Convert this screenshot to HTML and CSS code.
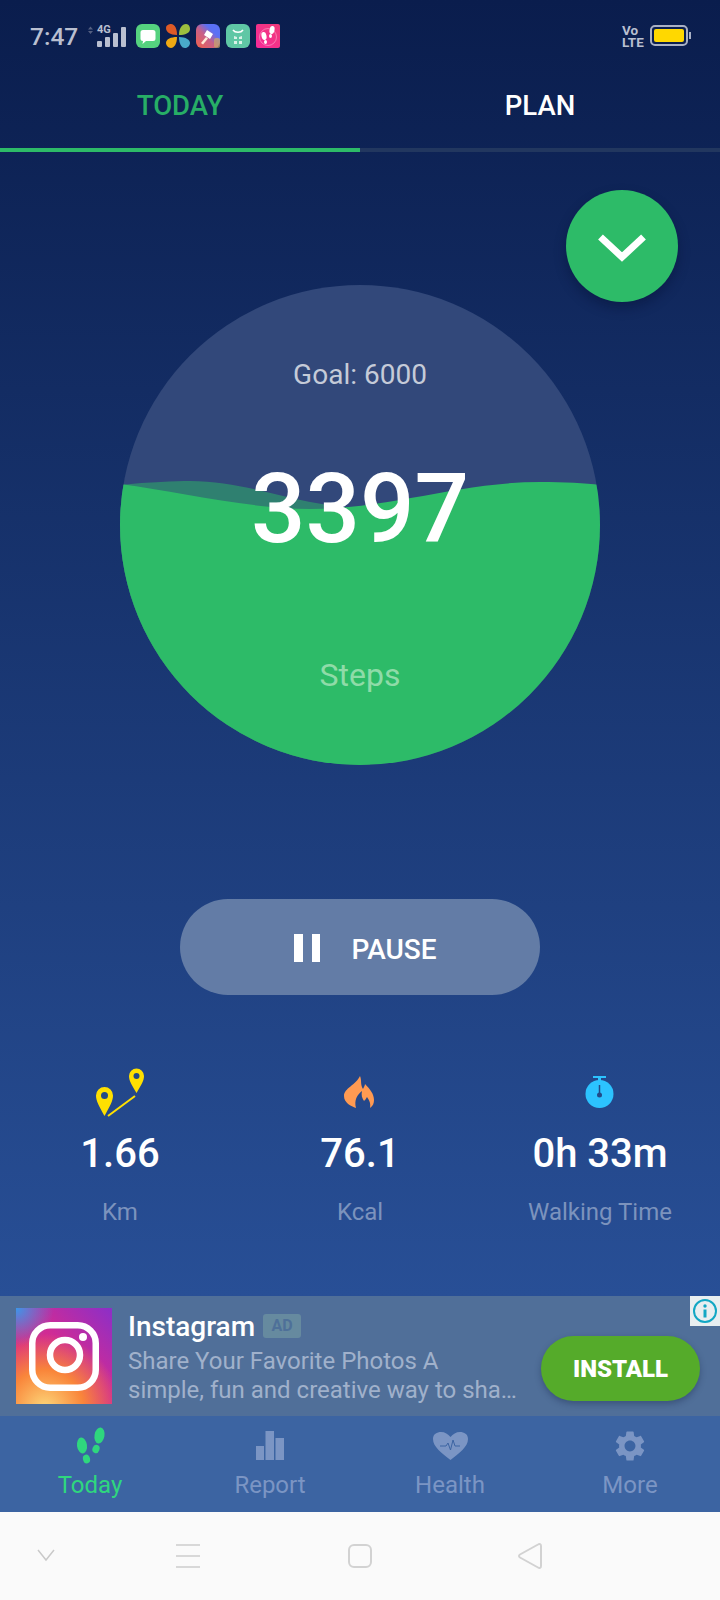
FILE: index.html
```html
<!DOCTYPE html>
<html>
<head lang="en">
    <meta charset="UTF-8">
    <title>Steps</title>
    <link rel="stylesheet" href="styles.css">
</head>
<body>
<div id="page">
    <div id="status">
        <span class="time">7:47</span>
        <svg class="net" width="42" height="24" viewBox="0 0 42 24">
            <path d="M3 3.500 5.500 .5 8 3.500zM3 5 5.500 8 8 5z" fill="#545f80"/>
            <rect x="12" y="15" width="5" height="6" rx="1" fill="#b9bfd0"/>
            <rect x="20" y="11" width="5" height="10" rx="1" fill="#b9bfd0"/>
            <rect x="28" y="7" width="5" height="14" rx="1" fill="#b9bfd0"/>
            <rect x="36" y="1" width="5" height="20" rx="1" fill="#b9bfd0"/>
        </svg>
        <span class="net-label">4G</span>
        <div class="apps">
            <svg width="24" height="24" viewBox="0 0 24 24">
                <rect width="24" height="24" rx="6" fill="#55d27f"/>
                <path d="M7 6h10a2.500 2.500 0 0 1 2.500 2.500v6a2.500 2.500 0 0 1-2.500 2.500h-7l-3.500 3 .5-3a2.500 2.500 0 0 1-2.500-2.500v-6A2.500 2.500 0 0 1 7 6z" fill="#fff"/>
            </svg>
            <svg width="24" height="24" viewBox="0 0 24 24">
                <path d="M11 11C4 11 0 8 0 4 0 1 3 0 5 0c4 0 6 5 6 11z" fill="#de5a26"/>
                <path d="M13 11c0-7 3-11 7-11 3 0 4 3 4 5 0 4-5 6-11 6z" fill="#9dbf3f"/>
                <path d="M11 13c0 7-3 11-6 11-3 0-5-3-5-5 0-4 5-6 11-6z" fill="#efa913"/>
                <path d="M13 13c7 0 11 3 11 6 0 3-3 5-5 5-4 0-6-5-6-11z" fill="#49a9c9"/>
            </svg>
            <svg width="24" height="24" viewBox="0 0 24 24">
                <defs>
                    <linearGradient id="hammerBg" x1="0" y1="1" x2="1" y2="0">
                        <stop offset="0" stop-color="#f0604a"/>
                        <stop offset=".45" stop-color="#c8608a"/>
                        <stop offset=".7" stop-color="#5a70f5"/>
                    </linearGradient>
                </defs>
                <rect width="24" height="24" rx="6" fill="url(#hammerBg)"/>
                <rect x="18" y="14" width="6" height="10" rx="2" fill="#cfa765" opacity=".7"/>
                <path d="M11 6l6 4-3 5-6-4z" fill="#fff"/>
                <path d="M10 13l2 1.500-5 6-2-1.500z" fill="#ffe9d6"/>
            </svg>
            <svg width="24" height="24" viewBox="0 0 24 24">
                <rect width="24" height="24" rx="6" fill="#5fc7a5"/>
                <path d="M7 6c2 3 8 3 10 0" stroke="#fff" stroke-width="1.500" fill="none"/>
                <path d="M8 12l3 1v2H8zM13 13l3-1v3h-3zM8 17h3v3H8zM13 17h3v3h-3z" fill="#d9f2e8"/>
            </svg>
            <svg width="24" height="24" viewBox="0 0 24 24">
                <defs>
                    <linearGradient id="feetBg" x1="0" y1="1" x2="1" y2="0">
                        <stop offset="0" stop-color="#f52a9a"/>
                        <stop offset="1" stop-color="#f03a78"/>
                    </linearGradient>
                </defs>
                <rect width="24" height="24" rx="2" fill="url(#feetBg)"/>
                <circle cx="12" cy="13" r="8.500" fill="none" stroke="#fff" stroke-opacity=".35"/>
                <ellipse cx="8" cy="12" rx="2.500" ry="4" fill="#fff" transform="rotate(-12 8 12)"/>
                <ellipse cx="9.500" cy="18" rx="1.500" ry="2" fill="#fff"/>
                <ellipse cx="16" cy="6" rx="2.500" ry="4" fill="#fff" transform="rotate(12 16 6)"/>
                <ellipse cx="14.500" cy="12" rx="1.500" ry="2" fill="#fff"/>
            </svg>
        </div>
        <span class="volte">Vo<br>LTE</span>
        <div class="battery"><div class="battery-fill"></div></div>
    </div>

    <ul id="tab">
        <li class="selected">TODAY</li>
        <li>PLAN</li>
    </ul>

    <div id="main">
        <div class="fab">
            <svg width="48" height="32" viewBox="0 0 48 32">
                <path d="M2.500 7 24 27 45.500 7" fill="none" stroke="#fff" stroke-width="7"/>
            </svg>
        </div>

        <div class="ball">
            <svg class="wave" width="480" height="480" viewBox="0 0 480 480">
                <path d="M0 200C30 197 55 196 70 196c60 0 110 26 180 28v256H0z" fill="#2f8070"/>
                <path d="M0 199c60 8 130 25 190 25 80 0 150-27 230-27 25 0 45 1 60 3v280H0z" fill="#2dbb68"/>
            </svg>
            <div class="goal">Goal: 6000</div>
            <div class="count">3397</div>
            <div class="unit">Steps</div>
        </div>

        <div class="pause">
            <span class="pause-icon"><i></i><i></i></span>
            <span class="pause-text">PAUSE</span>
        </div>

        <div class="stats">
            <div class="stat">
                <svg width="60" height="52" viewBox="0 0 60 52">
                    <path d="M14.500 50C9 40 6 35 6 29.500a8.500 8.500 0 0 1 17 0C23 35 20 40 14.500 50z" fill="#ffe000"/>
                    <circle cx="14.500" cy="29.500" r="3.500" fill="#234a87"/>
                    <path d="M46.500 27C42 19 39 15 39 10a7.500 7.500 0 0 1 15 0c0 5-3 9-7.500 17z" fill="#ffe000"/>
                    <circle cx="46.500" cy="10" r="3" fill="#234a87"/>
                    <path d="M18 50l27-20" stroke="#ffe000" stroke-width="2"/>
                </svg>
                <div class="val">1.66</div>
                <div class="lbl">Km</div>
            </div>
            <div class="stat">
                <svg width="60" height="52" viewBox="0 0 60 52">
                    <path d="M30 10c2 5 0 8 3 13 1-2 2-4 2-5 5 5 9 10 9 16 0 3-1 6-4 8 1-5-1-8-3-11-1 2-2 3-3 4-2-3-3-6-2-10-5 4-8 9-6 17-5-2-12-5-12-12 0-8 12-11 16-20z" fill="#ff9a52"/>
                </svg>
                <div class="val">76.1</div>
                <div class="lbl">Kcal</div>
            </div>
            <div class="stat">
                <svg width="60" height="52" viewBox="0 0 60 52">
                    <path d="M23 10h13v2h-5v4h-3v-4h-5z" fill="#2cc3ff"/>
                    <circle cx="29.500" cy="28" r="14" fill="#2cc3ff"/>
                    <path d="M29.500 19v9" stroke="#234a87" stroke-width="1.500"/>
                    <circle cx="29.500" cy="29" r="2.500" fill="#234a87"/>
                </svg>
                <div class="val">0h 33m</div>
                <div class="lbl">Walking Time</div>
            </div>
        </div>
    </div>

    <div id="ad">
        <div class="ad-icon">
            <svg width="96" height="96" viewBox="0 0 96 96">
                <rect x="16.250" y="17.250" width="63.500" height="62.500" rx="18" fill="none" stroke="#fff" stroke-width="6.500"/>
                <circle cx="49" cy="47" r="15" fill="none" stroke="#fff" stroke-width="6.500"/>
                <circle cx="67" cy="29" r="4" fill="#fff"/>
            </svg>
        </div>
        <div class="ad-text">
            <div class="ad-title">Instagram <span class="ad-tag">AD</span></div>
            <div class="ad-desc">Share Your Favorite Photos A<br>simple, fun and creative way to sha…</div>
        </div>
        <div class="install">INSTALL</div>
        <div class="info">
            <svg width="26" height="26" viewBox="0 0 26 26">
                <circle cx="13" cy="13" r="11" fill="none" stroke="#12a7c4" stroke-width="2"/>
                <circle cx="13" cy="8" r="1.700" fill="#12a7c4"/>
                <path d="M13 11.500v8" stroke="#12a7c4" stroke-width="3"/>
            </svg>
        </div>
    </div>

    <ul id="nav">
        <li class="selected">
            <svg width="40" height="40" viewBox="0 0 40 40">
                <ellipse cx="12" cy="19.500" rx="5" ry="8" transform="rotate(-8 12 19.500)"/>
                <ellipse cx="16.500" cy="33" rx="3.500" ry="4.500" transform="rotate(-15 16.500 33)"/>
                <ellipse cx="29.500" cy="9.500" rx="5" ry="8" transform="rotate(10 29.500 9.500)"/>
                <ellipse cx="26" cy="23" rx="3.500" ry="4.200" transform="rotate(20 26 23)"/>
            </svg>
            <span>Today</span>
        </li>
        <li>
            <svg width="40" height="40" viewBox="0 0 40 40">
                <path d="M6 20h8v14H6zM15.500 5H24v29h-8.500zM25.500 12H34v22h-8.500z"/>
            </svg>
            <span>Report</span>
        </li>
        <li>
            <svg width="40" height="40" viewBox="0 0 40 40">
                <path d="M20.500 34C12 27 3 21 3 13 3 8 7 6 11 6c4 0 7 2 9.500 5C23 8 26 6 30 6c4 0 8 2 8 7 0 8-9 14-17.500 21z"/>
                <path d="M10 20h6l2-3 2.500 7 2.500-10 2 6h5" fill="none" stroke="#3c64a2" stroke-width="1"/>
            </svg>
            <span>Health</span>
        </li>
        <li>
            <svg width="40" height="40" viewBox="-1.200 -1.200 26.400 26.400">
                <path d="M19.140 12.940c.04-.3.06-.61.06-.94 0-.32-.02-.64-.07-.94l2.030-1.580c.18-.14.23-.41.12-.61l-1.920-3.320c-.12-.22-.37-.29-.59-.22l-2.390.96c-.5-.38-1.030-.7-1.620-.94l-.36-2.540c-.04-.24-.24-.41-.48-.41h-3.840c-.24 0-.43.17-.47.41l-.36 2.540c-.59.24-1.130.57-1.620.94l-2.390-.96c-.22-.08-.47 0-.59.22L2.740 8.870c-.12.21-.08.47.12.61l2.030 1.580c-.05.3-.09.63-.09.94s.02.64.07.94l-2.030 1.580c-.18.14-.23.41-.12.61l1.920 3.320c.12.22.37.29.59.22l2.390-.96c.5.38 1.030.7 1.620.94l.36 2.540c.05.24.24.41.48.41h3.840c.24 0 .44-.17.47-.41l.36-2.540c.59-.24 1.130-.56 1.620-.94l2.390.96c.22.08.47 0 .59-.22l1.920-3.320c.12-.22.07-.47-.12-.61l-2.010-1.580zM12 15.600c-1.980 0-3.600-1.620-3.600-3.600s1.620-3.600 3.600-3.600 3.600 1.620 3.600 3.600-1.620 3.600-3.600 3.600z"/>
            </svg>
            <span>More</span>
        </li>
    </ul>

    <div id="sysbar">
        <svg width="180" height="40" viewBox="0 0 180 40">
            <path d="M1 14l8 10 8-10" fill="none" stroke="#c9c9c9" stroke-width="1.500"/>
            <path d="M139 9h24M139 20h24M139 31h24" stroke="#d8d8d8" stroke-width="2"/>
        </svg>
        <svg width="30" height="40" viewBox="0 0 30 40">
            <rect x="4" y="9" width="22" height="22" rx="5" fill="none" stroke="#d2d2d2" stroke-width="2"/>
        </svg>
        <svg width="30" height="40" viewBox="0 0 30 40">
            <path d="M26 10v20c0 2-1.500 2.500-3 1.500L5 21.500c-1.300-.8-1.300-2.200 0-3L23 8.500c1.500-1 3-.5 3 1.500z" fill="none" stroke="#d2d2d2" stroke-width="2"/>
        </svg>
    </div>
</div>
</body>
</html>
```
FILE: styles.css
```css
*{
    margin: 0;
    padding: 0;
    box-sizing: border-box;
}
ul{
    list-style: none;
}
body{
    font-family: Roboto, "Liberation Sans", sans-serif;
}
#page{
    width: 720px;
    height: 1600px;
    display: flex;
    flex-direction: column;
    background: linear-gradient(#0a1d4d 0, #284f96 1296px);
    color: #fff;
}

/* status bar */
#status{
    height: 72px;
    display: flex;
    align-items: flex-start;
    padding: 24px 32px 0 30px;
    color: #b9bfd0;
    position: relative;
}
.time{
    font-size: 24.5px;
    line-height: 26px;
    font-weight: 500;
    width: 55px;
}
.net{
    margin-top: 2px;
}
.net-label{
    position: absolute;
    left: 97px;
    top: 24px;
    font-size: 11px;
    line-height: 12px;
    font-weight: 700;
}
.apps{
    display: flex;
    gap: 6px;
    margin-left: 9px;
}
.volte{
    margin-left: auto;
    font-size: 13.5px;
    line-height: 12px;
    font-weight: 700;
    width: 28px;
}
.battery{
    width: 38px;
    height: 21px;
    margin-top: 1px;
    border: 2px solid #a9b0c4;
    border-radius: 5px;
    padding: 2px;
    position: relative;
}
.battery:after{
    content: "";
    position: absolute;
    right: -5px;
    top: 5px;
    width: 2px;
    height: 7px;
    background: #a9b0c4;
}
.battery-fill{
    height: 100%;
    background: #ffd800;
    border-radius: 2px;
}

/* tabs */
#tab{
    display: flex;
    height: 80px;
}
#tab li{
    flex: 1;
    font-size: 27.5px;
    font-weight: 500;
    line-height: 68px;
    text-align: center;
    border-bottom: 4px solid #22375f;
}
#tab .selected{
    color: #27ae66;
    border-bottom-color: #2dbb68;
}

/* main area */
#main{
    flex: 1;
    display: flex;
    flex-direction: column;
    align-items: center;
    padding-top: 133px;
    position: relative;
}
.fab{
    position: absolute;
    left: 566px;
    top: 38px;
    width: 112px;
    height: 112px;
    border-radius: 50%;
    background: #2dbb68;
    box-shadow: 0 6px 12px rgba(5, 15, 50, .4);
    display: flex;
    align-items: center;
    justify-content: center;
}
.ball{
    width: 480px;
    height: 480px;
    border-radius: 50%;
    background: #32487a;
    overflow: hidden;
    position: relative;
    text-align: center;
}
.wave{
    position: absolute;
    left: 0;
    top: 0;
}
.goal,.count,.unit{
    position: relative;
}
.goal{
    margin-top: 72px;
    font-size: 28px;
    line-height: 36px;
    color: #c5cbd8;
}
.count{
    margin-top: 60px;
    font-size: 96px;
    font-weight: 500;
    line-height: 112px;
}
.unit{
    margin-top: 90px;
    font-size: 32px;
    line-height: 40px;
    color: #8fdba8;
}
.pause{
    width: 360px;
    height: 96px;
    margin-top: 134px;
    padding: 2px 0 0 11px;
    border-radius: 48px;
    background: #637ca6;
    display: flex;
    align-items: center;
    justify-content: center;
    gap: 31px;
    font-size: 28px;
    font-weight: 500;
}
.pause-text{
    margin-top: 2px;
}
.pause-icon{
    display: flex;
    gap: 9px;
}
.pause-icon i{
    display: block;
    width: 8.5px;
    height: 28px;
    background: #fff;
}
.stats{
    display: flex;
    width: 100%;
    margin-top: 71px;
}
.stat{
    width: 240px;
    text-align: center;
}
.stat svg{
    display: block;
    margin: 0 auto;
}
.val{
    margin-top: 12px;
    font-size: 40px;
    font-weight: 500;
    line-height: 48px;
}
.lbl{
    margin-top: 18px;
    font-size: 24px;
    line-height: 32px;
    color: #7c93bd;
}

/* ad */
#ad{
    height: 120px;
    background: #506f99;
    display: flex;
    padding: 12px 20px 0 16px;
    position: relative;
}
.ad-icon{
    width: 96px;
    height: 96px;
    background:
        radial-gradient(circle at 0 0, #3b97ea 0, rgba(59, 151, 234, 0) 28%),
        radial-gradient(circle at 30% 105%, #fdd87a 0, #f9853a 32%, rgba(249, 133, 58, 0) 62%),
        linear-gradient(45deg, #e02c7e 20%, #d02b95 55%, #8b2fc8 100%);
}
.ad-text{
    margin-left: 16px;
    width: 395px;
}
.ad-title{
    font-size: 28px;
    font-weight: 500;
    line-height: 36px;
    margin-top: 1px;
    display: flex;
    align-items: center;
    gap: 2px;
}
.ad-tag{
    width: 38px;
    height: 24px;
    margin-left: 6px;
    margin-top: -2px;
    border-radius: 3px;
    background: #668a9f;
    color: #4e7099;
    font-size: 16px;
    font-weight: 700;
    line-height: 24px;
    text-align: center;
}
.ad-desc{
    font-size: 24px;
    line-height: 29px;
    margin-top: 2px;
    color: #a0b1cb;
    white-space: nowrap;
}
.install{
    position: absolute;
    left: 541px;
    top: 40px;
    width: 159px;
    height: 65px;
    border-radius: 33px;
    background: #55ab2a;
    box-shadow: 0 3px 6px rgba(20, 35, 70, .35);
    font-size: 24px;
    font-weight: 900;
    line-height: 67px;
    text-align: center;
}
.info{
    position: absolute;
    right: 0;
    top: 0;
    width: 30px;
    height: 30px;
    background: #e8eef0;
    display: flex;
    align-items: center;
    justify-content: center;
}

/* bottom nav */
#nav{
    height: 96px;
    background: #3c64a2;
    display: flex;
}
#nav li{
    width: 180px;
    padding-top: 10px;
    text-align: center;
    color: #7b95c4;
    fill: #7b95c4;
    font-size: 24px;
    line-height: 30px;
}
#nav svg{
    display: block;
    margin: 0 auto 4px;
}
#nav .selected{
    color: #2fd77e;
    fill: #2fd77e;
}

/* system buttons */
#sysbar{
    height: 88px;
    background: #fafafa;
    display: flex;
    align-items: center;
    padding: 0 0 0 37px;
}
#sysbar svg:nth-child(2){
    margin-left: 128px;
}
#sysbar svg:nth-child(3){
    margin-left: 140px;
}
```
